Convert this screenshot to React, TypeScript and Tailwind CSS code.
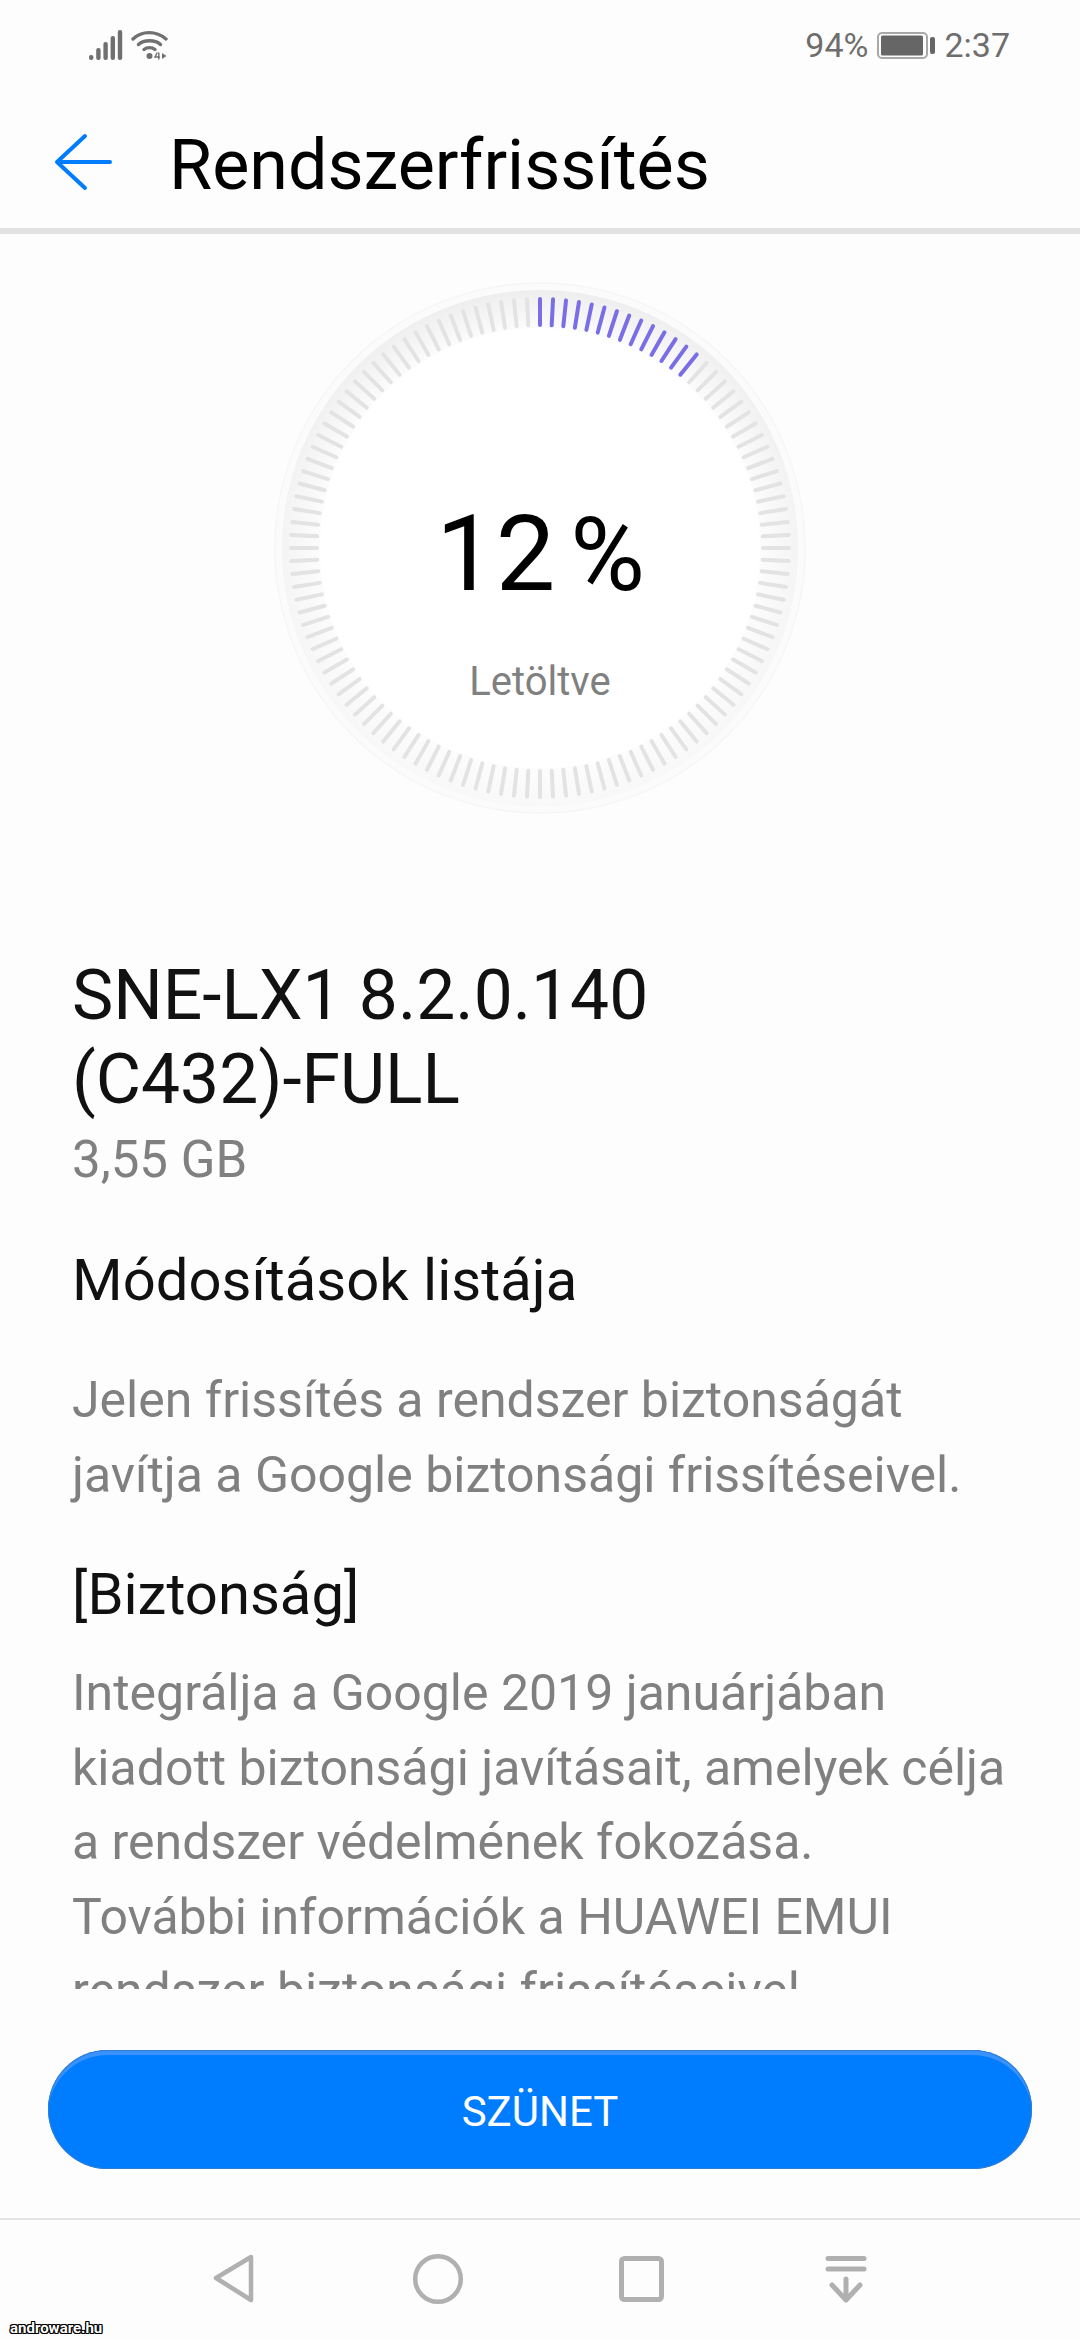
const ticks = Array.from({ length: 120 }, (_, i) => i);

function SignalIcon() {
  const bars = [5, 12, 18, 24, 30];
  return (
    <svg width="36" height="30" viewBox="0 0 36 30" fill="#707070">
      {bars.map((h, i) => (
        <rect key={i} x={1 + i * 7.2} y={30 - h} width="4.4" height={h} rx="2" />
      ))}
    </svg>
  );
}

function WifiIcon() {
  return (
    <svg width="38" height="30" viewBox="0 0 38 30" fill="none" stroke="#707070" strokeWidth="3.4" strokeLinecap="round">
      <path d="M2 9 C 11 0.5, 25 0.5, 35 9" />
      <path d="M7.5 14.5 C 13 9.5, 24 9.5, 29.5 14.5" />
      <path d="M13 19.5 C 16 17, 21 17, 24 19.5" />
      <circle cx="18.5" cy="26" r="3" fill="#707070" stroke="none" />
      <path d="M26 23 L24 27 H28.5 M27.8 23 V29" strokeWidth="1.4" />
      <path d="M31 23 L35.5 26 L31 29 Z" fill="#707070" stroke="none" />
    </svg>
  );
}

function BatteryIcon() {
  return (
    <svg width="58" height="27" viewBox="0 0 58 27">
      <rect x="1" y="1" width="49" height="25" rx="4" fill="none" stroke="#a8a8a8" strokeWidth="2" />
      <rect x="4" y="3.5" width="42" height="20" rx="1.5" fill="#666666" />
      <rect x="53" y="5" width="5" height="17" rx="2" fill="#666666" />
    </svg>
  );
}

function ProgressRing() {
  return (
    <svg width="540" height="540" viewBox="0 0 540 540" className="[grid-area:1/1]">
      <defs>
        <radialGradient id="ringShade" cx="50%" cy="50%" r="50%">
          <stop offset="82%" stopColor="#ffffff" />
          <stop offset="90%" stopColor="#f7f7f7" />
          <stop offset="100%" stopColor="#eeeeee" />
        </radialGradient>
        <linearGradient id="ringFade" x1="0" y1="0" x2="0" y2="1">
          <stop offset="0%" stopColor="#fdfdfd" stopOpacity="0" />
          <stop offset="60%" stopColor="#fdfdfd" stopOpacity="0.5" />
          <stop offset="100%" stopColor="#fdfdfd" stopOpacity="0.7" />
        </linearGradient>
      </defs>
      <circle cx="270" cy="270" r="265" fill="#fbfbfb" stroke="#f6f6f6" strokeWidth="1.5" />
      <circle cx="270" cy="270" r="258" fill="url(#ringShade)" />
      <circle cx="270" cy="270" r="258" fill="url(#ringFade)" />
      <circle cx="270" cy="270" r="220" fill="#ffffff" />
      {ticks.map((i) => (
        <line
          key={i}
          x1="270"
          y1="21"
          x2="270"
          y2="47"
          stroke={i < 14 ? '#7a6ee6' : '#e3e3e3'}
          strokeWidth="4"
          strokeLinecap="round"
          transform={`rotate(${i * 3} 270 270)`}
        />
      ))}
    </svg>
  );
}

function NavBar() {
  return (
    <nav className="h-[120px] border-t-2 border-[#e4e4e4] pt-[30px]">
      <svg width="1080" height="60" viewBox="0 0 1080 60" fill="none" stroke="#b0b0b0" strokeWidth="4.5" strokeLinejoin="round" strokeLinecap="round">
        <path d="M251 7 L216 28 L251 50 Z" />
        <circle cx="438" cy="29" r="22.8" />
        <rect x="621.5" y="8.5" width="40" height="41" rx="3" strokeWidth="5" />
        <path d="M828 8.5 H864 M828 19 H864" strokeWidth="5" />
        <path d="M846 29 V50 M832 35 L846 50 L860 35" strokeWidth="5" />
      </svg>
    </nav>
  );
}

export default function App() {
  return (
    <div className="relative flex h-[2340px] w-[1080px] flex-col overflow-hidden bg-[#fdfdfd] font-['Roboto',sans-serif]">
      <header className="flex h-[92px] items-center justify-between pb-[2px] pl-[88px] pr-[70px] text-[34px] text-[#6e6e6e]">
        <div className="flex items-center gap-[7px]">
          <SignalIcon />
          <WifiIcon />
        </div>
        <div className="flex items-center gap-[9px]">
          <span>94%</span>
          <BatteryIcon />
          <span>2:37</span>
        </div>
      </header>

      <div className="flex h-[142px] items-center border-b-[6px] border-[#e2e2e2] pl-[54px] pt-[4px]">
        <svg width="58" height="58" viewBox="0 0 58 58" fill="none" stroke="#007dff" strokeWidth="4" strokeLinecap="round" strokeLinejoin="round">
          <path d="M31 3 L3 29 L31 55 M3 29 H56" />
        </svg>
        <h1 className="ml-[57px] mt-[6px] text-[70px] leading-none text-black">Rendszerfrissítés</h1>
      </div>

      <main className="h-[1755px] min-h-0 overflow-hidden pt-[44px]">
        <div className="grid justify-center">
          <ProgressRing />
          <div className="z-10 flex flex-col items-center pt-[211px] [grid-area:1/1]">
            <div className="flex items-baseline pl-[1px] text-black">
              <span className="text-[106px] leading-[130px]">12</span>
              <span className="ml-[15px] text-[102px] leading-[130px]">%</span>
            </div>
            <span className="mt-[38px] text-[40px] leading-[48px] text-[#808080]">Letöltve</span>
          </div>
        </div>

        <section className="mt-[136px] px-[72px]">
          <h2 className="text-[69.5px] leading-[84px] text-[#111111]">
            SNE-LX1 8.2.0.140
            <br />
            (C432)-FULL
          </h2>
          <p className="mt-[8px] text-[51px] leading-[60px] text-[#808080]">3,55 GB</p>
          <h3 className="mt-[57px] text-[58px] leading-[66px] text-[#111111]">Módosítások listája</h3>
          <p className="mt-[50px] text-[50px] leading-[74.5px] text-[#808080]">
            Jelen frissítés a rendszer biztonságát
            <br />
            javítja a Google biztonsági frissítéseivel.
          </p>
          <h3 className="mt-[49px] text-[58px] leading-[66px] text-[#111111]">[Biztonság]</h3>
          <p className="mt-[29px] text-[50px] leading-[74.5px] text-[#808080]">
            Integrálja a Google 2019 januárjában
            <br />
            kiadott biztonsági javításait, amelyek célja
            <br />
            a rendszer védelmének fokozása.
            <br />
            További információk a HUAWEI EMUI
            <br />
            rendszer biztonsági frissítéseivel
          </p>
        </section>
      </main>

      <div className="h-[229px] px-[48px] pt-[61px]">
        <button className="h-[119px] w-full rounded-full bg-[#007dff] pt-[3px] text-[42px] text-white shadow-[inset_0_0_0_1px_#2f7dd6,inset_0_5px_0_#3a92ff]">
          SZÜNET
        </button>
      </div>

      <NavBar />

      <span className="absolute bottom-[3px] left-[10px] text-[15px] leading-[18px] font-bold text-white [text-shadow:1px_0_0_#000,-1px_0_0_#000,0_1px_0_#000,0_-1px_0_#000,1px_1px_0_#000,-1px_-1px_0_#000,1px_-1px_0_#000,-1px_1px_0_#000]">
        androware.hu
      </span>
    </div>
  );
}
